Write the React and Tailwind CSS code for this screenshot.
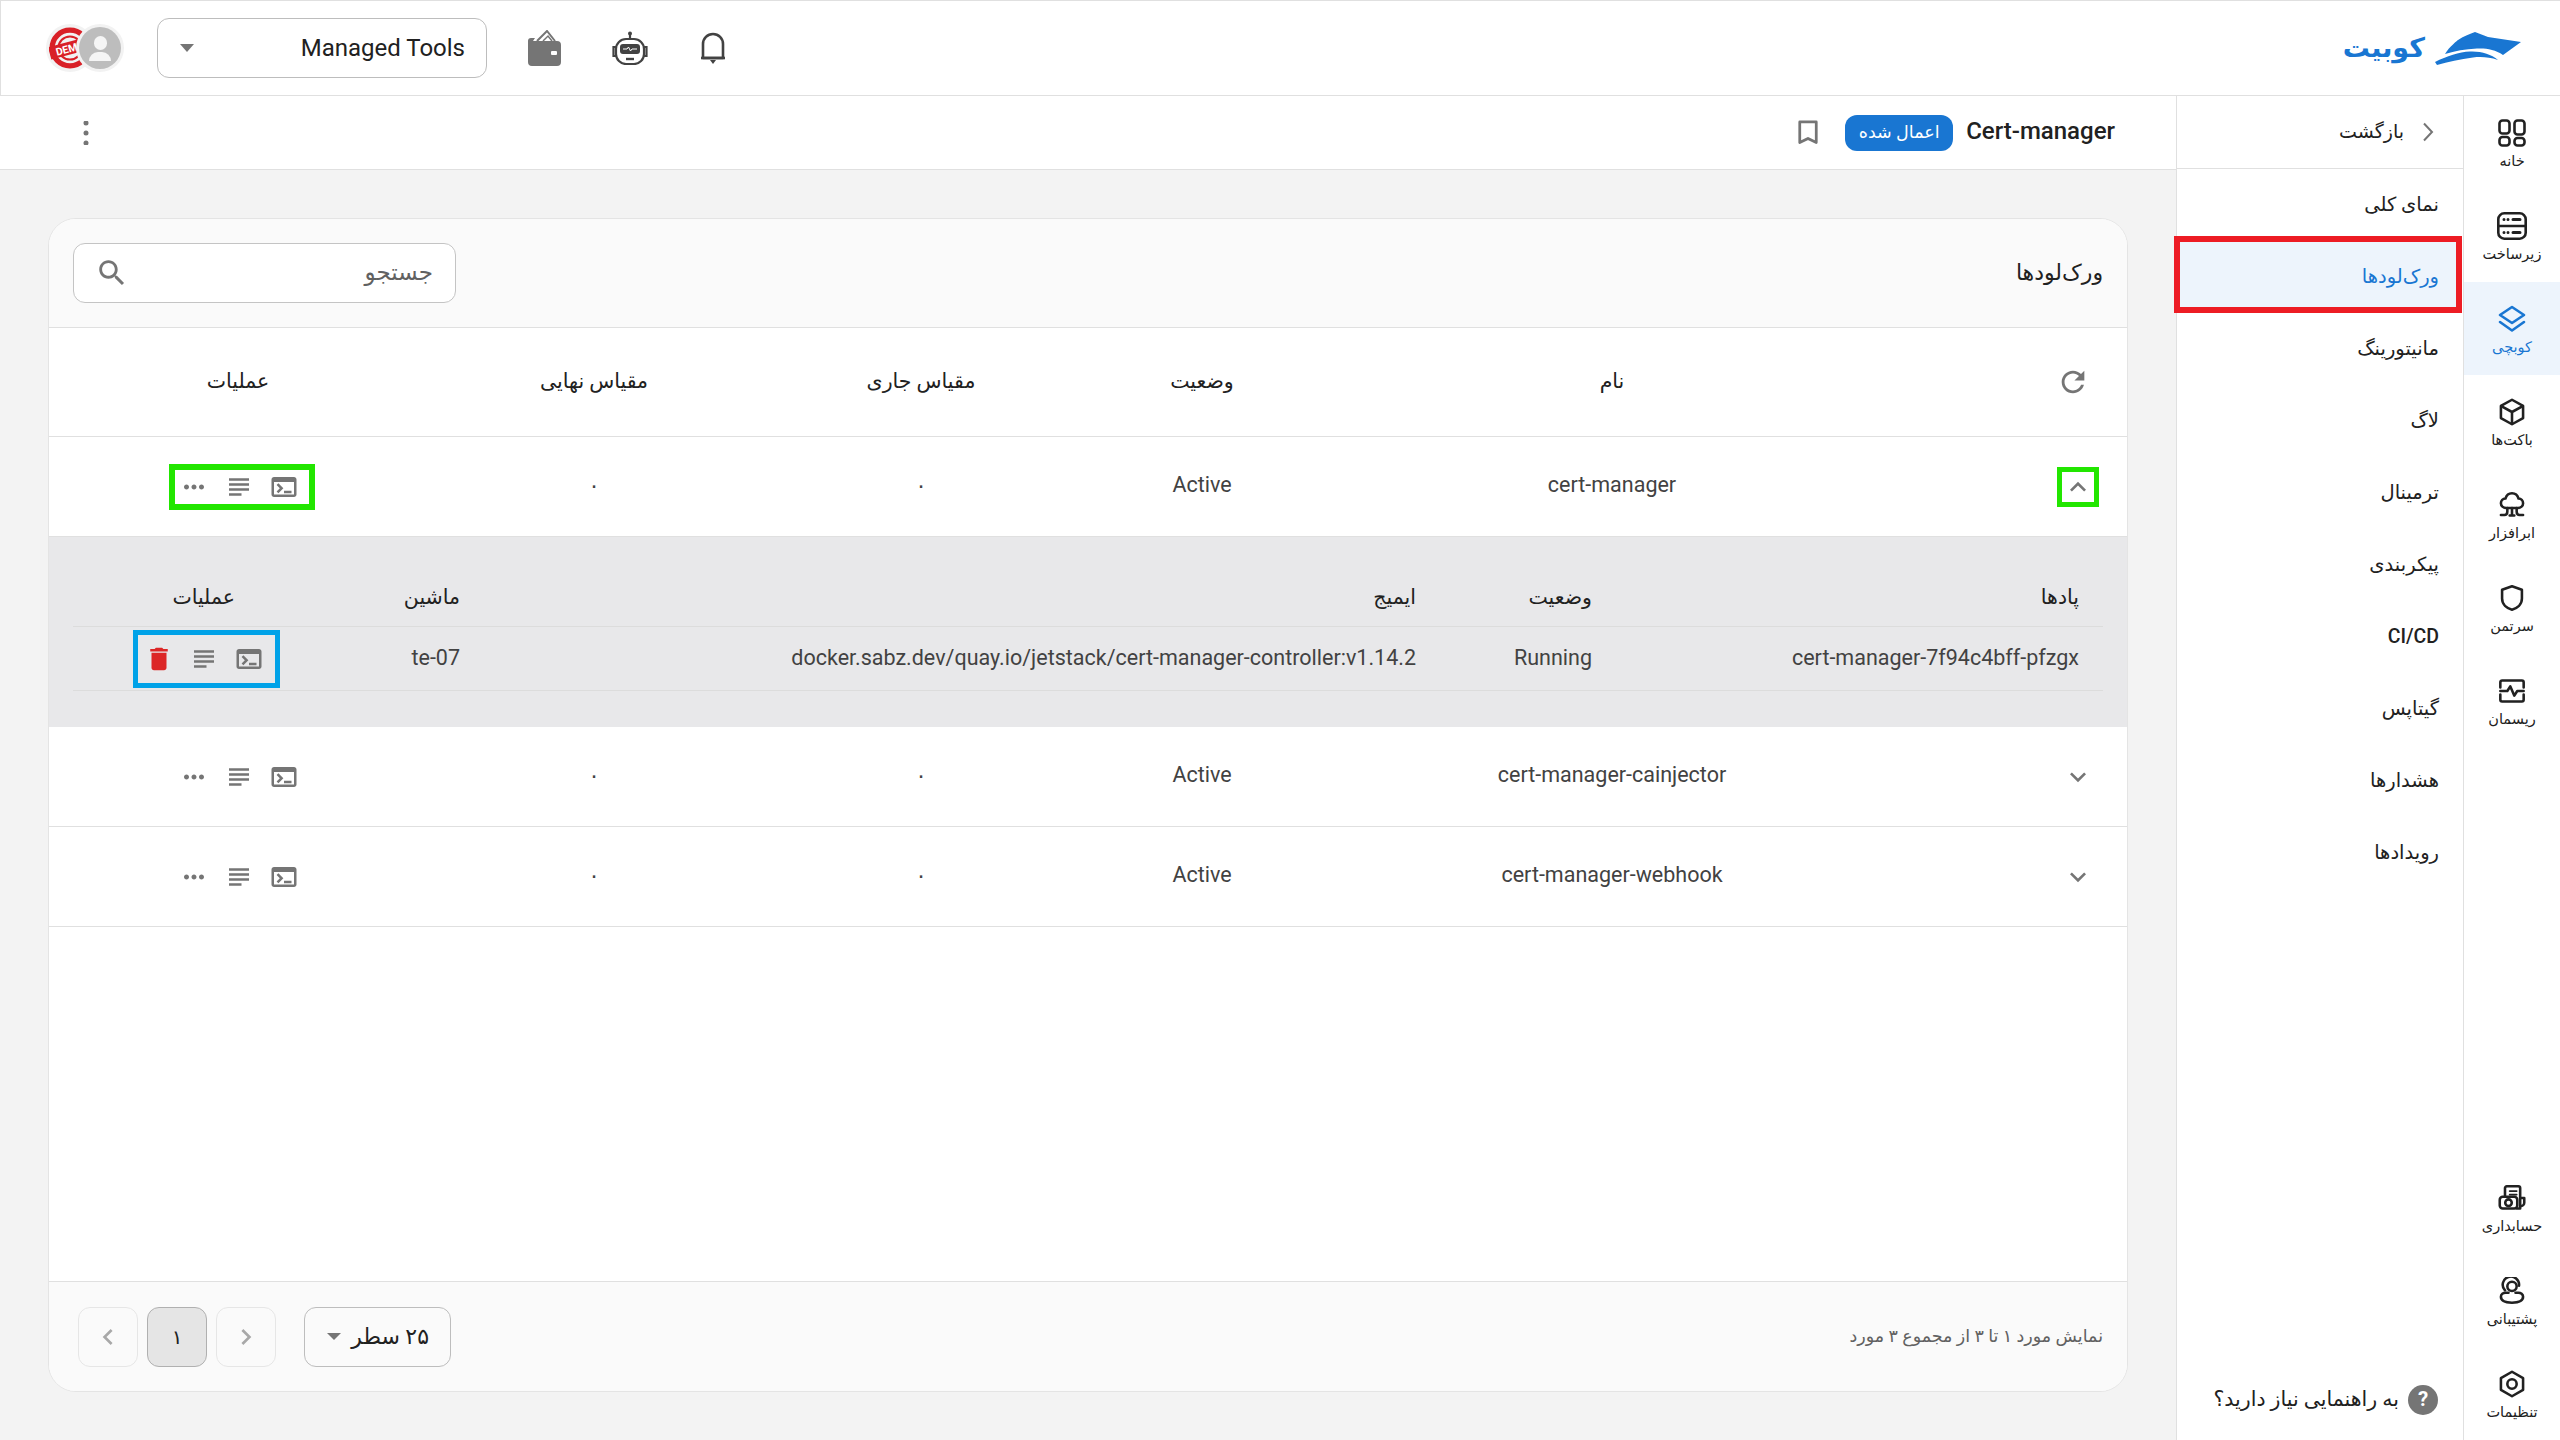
const M = ({ d, className = '' }) => (
  <svg viewBox="0 0 24 24" className={className} fill="currentColor"><path d={d} /></svg>
);

const S = ({ children, vb = '0 0 24 24', sw = 2 }) => (
  <svg viewBox={vb} className="w-full h-full" fill="none" stroke="currentColor" strokeWidth={sw} strokeLinecap="round" strokeLinejoin="round">{children}</svg>
);

const icons = {
  terminal: 'M20 4H4c-1.1 0-2 .9-2 2v12c0 1.1.9 2 2 2h16c1.1 0 2-.9 2-2V6c0-1.1-.9-2-2-2zm0 14H4V8h16v10zm-2-1h-6v-2h6v2zM7.5 17l-1.41-1.41L8.67 13l-2.59-2.59L7.5 9l4 4-4 4z',
  notes: 'M14 17H4v2h10v-2zm6-8H4v2h16V9zM4 15h16v-2H4v2zM4 5v2h16V5H4z',
  trash: 'M6 19c0 1.1.9 2 2 2h8c1.1 0 2-.9 2-2V7H6v12zM19 4h-3.5l-1-1h-5l-1 1H5v2h14V4z',
  dots: 'M6 10c-1.1 0-2 .9-2 2s.9 2 2 2 2-.9 2-2-.9-2-2-2zm12 0c-1.1 0-2 .9-2 2s.9 2 2 2 2-.9 2-2-.9-2-2-2zm-6 0c-1.1 0-2 .9-2 2s.9 2 2 2 2-.9 2-2-.9-2-2-2z',
  refresh: 'M17.65 6.35C16.2 4.9 14.21 4 12 4c-4.42 0-7.99 3.58-7.99 8s3.57 8 7.99 8c3.73 0 6.84-2.55 7.73-6h-2.08c-.82 2.33-3.04 4-5.65 4-3.31 0-6-2.69-6-6s2.69-6 6-6c1.66 0 3.14.69 4.22 1.78L13 11h7V4l-2.35 2.35z',
  search: 'M15.5 14h-.79l-.28-.27C15.41 12.59 16 11.11 16 9.5 16 5.91 13.09 3 9.5 3S3 5.91 3 9.5 5.91 16 9.5 16c1.61 0 3.09-.59 4.23-1.57l.27.28v.79l5 4.99L20.49 19l-4.99-5zm-6 0C7.01 14 5 11.99 5 9.5S7.01 5 9.5 5 14 7.01 14 9.5 11.99 14 9.5 14z',
  down: 'M16.59 8.59 12 13.17 7.41 8.59 6 10l6 6 6-6z',
  up: 'M12 8l-6 6 1.41 1.41L12 10.83l4.59 4.58L18 14z',
  left: 'M15.41 7.41 14 6l-6 6 6 6 1.41-1.41L10.83 12z',
  right: 'M10 6 8.59 7.41 13.17 12l-4.58 4.59L10 18l6-6z',
};

/* ── Rail icons ── */
const railIcons = {
  home: (
    <S vb="0 0 30 28" sw={2.6}>
      <rect x="2.500" y="1.500" width="10" height="13" rx="3" /><rect x="17.500" y="1.500" width="10" height="14" rx="3" />
      <rect x="2.500" y="18" width="10" height="8.500" rx="3" /><rect x="17.500" y="19" width="10" height="7.500" rx="3" />
    </S>
  ),
  infra: (
    <S vb="0 0 30 28" sw={2.6}>
      <rect x="1.300" y="1.300" width="27.400" height="25.400" rx="6" /><path d="M2 14h26" />
      <path d="M7 7.500h.01M11 7.500h.01M16 7.500h7M7 20.500h.01M11 20.500h.01M16 20.500h7" strokeWidth="3" />
    </S>
  ),
  kube: (
    <S vb="0 0 30 28" sw={2.600}>
      <path d="M15 2 27 10 15 18 3 10z" /><path d="M3 17l12 8.500L27 17" />
    </S>
  ),
  box: (
    <S sw={2.200}>
      <path d="M12 1.500 21.500 6.800v10.400L12 22.500l-9.500-5.300V6.800z" /><path d="M2.800 7 12 12l9.200-5M12 12v10" />
    </S>
  ),
  cloud: (
    <S sw={2.200}>
      <path d="M7 14.500c-2.600 0-4.500-1.700-4.500-4 0-2.200 1.700-3.900 3.900-4C7.200 3.700 9.400 2 12 2s4.800 1.700 5.600 4.500c2.200.1 3.900 1.800 3.900 4 0 2.300-1.900 4-4.500 4z" />
      <path d="M8 14.500v3c0 2-1 3-2.500 3H2.500M16 14.500v3c0 2 1 3 2.500 3h3M12 14.500v6M10 21h4" />
    </S>
  ),
  shield: (
    <S sw={2.200}>
      <path d="M12 2 3.500 5v7.500C3.500 17.500 7.500 20.800 12 22c4.500-1.200 8.500-4.500 8.500-9.500V5z" />
    </S>
  ),
  thread: (
    <S sw={2.200}>
      <path d="M2 9V4.500C2 3.700 2.700 3 3.500 3h17c.8 0 1.500.7 1.500 1.500V9M2 15v4.500c0 .8.7 1.500 1.500 1.500h17c.8 0 1.500-.7 1.500-1.500V15" />
      <path d="M2 12h6l2.500-4 3.500 8 2.500-4h5.500" />
    </S>
  ),
  account: (
    <S sw={2.200}>
      <path d="M6 10V3.500C6 2.700 6.700 2 7.500 2h10c.8 0 1.500.7 1.500 1.500V21h-3" />
      <path d="M10 6h6M10 9h6" strokeWidth="1.500" />
      <rect x="1.500" y="11" width="15" height="10" rx="2.500" /><circle cx="9" cy="16" r="2.800" />
      <path d="M19 12h3.500v4c0 1.500-1.200 3-3.500 3" />
    </S>
  ),
  support: (
    <S sw={2.200}>
      <circle cx="12" cy="8" r="4" /><path d="M6 11.500A7 7 0 1 1 18 7.500" />
      <path d="M9 13.500H6.500C4.500 13.500 2.500 14.800 2.500 17c0 3 3.500 5 9.500 5s9.500-2 9.500-5c0-2.200-2-3.500-4-3.500H15" />
    </S>
  ),
  settings: (
    <S sw={2.200}>
      <path d="M12 1.500 21.500 7v10L12 22.500 2.500 17V7z" /><circle cx="12" cy="12" r="4" />
    </S>
  ),
};

const topRail = [
  { key: 'home', label: 'خانه' },
  { key: 'infra', label: 'زیرساخت' },
  { key: 'kube', label: 'کوبچی', active: true },
  { key: 'box', label: 'باکت‌ها' },
  { key: 'cloud', label: 'ابرافزار' },
  { key: 'shield', label: 'سرتمن' },
  { key: 'thread', label: 'ریسمان' },
];
const bottomRail = [
  { key: 'account', label: 'حسابداری' },
  { key: 'support', label: 'پشتیبانی' },
  { key: 'settings', label: 'تنظیمات' },
];
const subItems = ['نمای کلی', 'ورک‌لودها', 'مانیتورینگ', 'لاگ', 'ترمینال', 'پیکربندی', 'CI/CD', 'گیتاپس', 'هشدارها', 'رویدادها'];

function RailItem({ item }) {
  return (
    <div className={`h-[93px] flex flex-col items-center pt-[23px] ${item.active ? 'bg-[#edf4fc] text-[#1976d2]' : 'text-[#212121]'}`}>
      <div className="w-[30px] h-[28px]">{railIcons[item.key]}</div>
      <span className="mt-[5px] text-[14.5px] leading-[20px]">{item.label}</span>
    </div>
  );
}

/* ── Logo ── */
function Logo() {
  return (
    <div className="flex items-center gap-[10px] text-[#1976d2]">
      <svg viewBox="0 0 86 33" className="w-[86px] h-[33px]" fill="currentColor">
        <path d="M40 0 53 5 86 10 68 23C60 17 50 16 42 16.500 30 17 20 19 10 22 14 15 23 8 23 8 29 4 35 2 40 0z" />
        <path d="M0 30C12 24 24 20 35 19.500 46 19 56 22 63 28 54 25 46 24.500 38 25.500 25 27 13 30 2 33z" />
      </svg>
      <span className="text-[27px] leading-none font-bold">کوبیت</span>
    </div>
  );
}

/* ── Top bar ── */
function TopBar() {
  return (
    <header className="h-[96px] shrink-0 bg-white border-y border-l border-[#e0e0e0] flex items-center justify-between pr-[39px] pl-[45px]">
      <Logo />
      <div className="flex items-center">
        <svg viewBox="0 0 26 32" className="w-[26px] h-[32px] text-[#424242] ml-[52px]" fill="none" stroke="currentColor" strokeWidth="2.600" strokeLinejoin="round">
          <path d="M3 26V12a10 10 0 0 1 20 0v14z" /><path d="M1 26h24" /><path d="M10 28h6l-3 4z" fill="currentColor" stroke="none" />
        </svg>
        <svg viewBox="0 0 36 34" className="w-[36px] h-[34px] text-[#424242] ml-[51px]" fill="none" stroke="currentColor" strokeWidth="2.200">
          <circle cx="18" cy="2.500" r="2" fill="currentColor" stroke="none" /><path d="M18 3v5" />
          <rect x="4" y="8" width="28" height="25" rx="10" /><path d="M4 16H1.500v9H4M32 16h2.500v9H32" />
          <rect x="8" y="13" width="20" height="10" rx="3" fill="currentColor" stroke="none" />
          <path d="M11 18h4l1.500-2 2 4 1.500-2h5" stroke="#fff" strokeWidth="1" /><path d="M14 28h8" strokeWidth="2.400" />
        </svg>
        <svg viewBox="0 0 34 36" className="w-[34px] h-[36px] text-[#757575] ml-[40px]" fill="none">
          <path d="M10 11 20 1l8 10" stroke="currentColor" strokeWidth="2" />
          <path d="M16 11l5-5 4 5" stroke="currentColor" strokeWidth="1.500" />
          <path d="M4 8h4l-2 3h24a4 4 0 0 1 4 4v17a4 4 0 0 1-4 4H5a4 4 0 0 1-4-4V11a3 3 0 0 1 3-3z" fill="currentColor" />
          <rect x="24" y="21" width="6" height="4" rx="1" fill="#fff" />
        </svg>
        <div className="w-[330px] h-[60px] rounded-[12px] border border-[#bdbdbd] flex items-center justify-between pr-[21px] pl-[22px] ml-[33px]">
          <span className="text-[24px] text-[#212121]" dir="ltr">Managed Tools</span>
          <span className="w-0 h-0 border-x-[7px] border-x-transparent border-t-[8px] border-t-[#757575]" />
        </div>
        <div className="relative w-[78px] h-[48px]">
          <div className="absolute left-0 top-0 w-[48px] h-[48px] rounded-full bg-[#f2f2f2] flex items-center justify-center">
            <svg viewBox="0 0 40 40" className="w-[42px] h-[42px]">
              <circle cx="20" cy="20" r="17" fill="none" stroke="#d92027" strokeWidth="5" />
              <circle cx="20" cy="20" r="11" fill="none" stroke="#d92027" strokeWidth="2" />
              <rect x="0" y="14" width="40" height="12" fill="#d92027" transform="rotate(-15 20 20)" />
              <text x="20" y="24" textAnchor="middle" fontSize="10" fontWeight="700" fill="#fff" transform="rotate(-15 20 20)" fontFamily="Roboto, sans-serif">DEMO</text>
            </svg>
          </div>
          <div className="absolute right-0 top-0 w-[48px] h-[48px] rounded-full bg-[#f2f2f2] flex items-center justify-center">
            <div className="w-[42px] h-[42px] rounded-full bg-[#bdbdbd] flex flex-col items-center justify-center">
              <span className="w-[13px] h-[14px] rounded-full bg-[#f5f5f5]" />
              <span className="w-[22px] h-[9px] mt-[2px] rounded-t-full bg-[#f5f5f5]" />
            </div>
          </div>
        </div>
      </div>
    </header>
  );
}

/* ── Actions box ── */
function ActionIcons({ first }) {
  return (
    <>
      <M d={icons.terminal} className="w-[30px] h-[30px] text-[#757575]" />
      <M d={icons.notes} className="w-[30px] h-[30px] text-[#757575] mr-[15px]" />
      {first}
    </>
  );
}

const mainCols = 'grid grid-cols-[200px_630px_190px_372px_282px_405px] items-center text-center';
const subCols = 'grid grid-cols-[487px_176px_956px_180px_232px] items-center border-b border-[#dcdcdc]';

function Row({ name, open, framed }) {
  return (
    <div className={`${mainCols} h-[100px] border-b border-[#e0e0e0] text-[21.5px] text-[#424242]`}>
      <div className="pr-[28px]">
        <div className={`w-[42px] h-[40px] flex items-center justify-center border-[5px] ${framed ? 'border-[#22e600]' : 'border-transparent'}`}>
          <M d={open ? icons.up : icons.down} className="w-[32px] h-[32px] shrink-0 text-[#757575]" />
        </div>
      </div>
      <div className="pb-[2px]">{name}</div>
      <div className="pb-[2px]">Active</div>
      <div>۰</div>
      <div>۰</div>
      <div className="pr-[17px] flex justify-center">
        <div className={`w-[146px] h-[46px] flex items-center pr-[10px] border-[6px] ${framed ? 'border-[#22e600]' : 'border-transparent'}`}>
          <ActionIcons first={<M d={icons.dots} className="w-[30px] h-[30px] text-[#757575] mr-[15px]" />} />
        </div>
      </div>
    </div>
  );
}

function PodsPanel() {
  return (
    <div className="h-[190px] bg-[#e8e8ea] px-[24px] text-[21.5px] text-[#424242]">
      <div className={`${subCols} h-[90px] pt-[32px] text-[20.5px] text-[#212121]`}>
        <div className="pr-[24px]">پادها</div>
        <div className="pr-[24px]">وضعیت</div>
        <div className="pr-[24px]">ایمیج</div>
        <div className="pr-[24px]">ماشین</div>
        <div className="pr-[69px]">عملیات</div>
      </div>
      <div className={`${subCols} h-[64px]`}>
        <div className="pr-[24px]">cert-manager-7f94c4bff-pfzgx</div>
        <div className="pr-[24px]">Running</div>
        <div className="pr-[24px]">docker.sabz.dev/quay.io/jetstack/cert-manager-controller:v1.14.2</div>
        <div className="pr-[24px]">te-07</div>
        <div className="pr-[24px]">
          <div className="w-[147px] h-[58px] flex items-center pr-[11px] border-[5px] border-[#00a2e8]">
            <ActionIcons first={<M d={icons.trash} className="w-[30px] h-[30px] text-[#dc2626] mr-[15px]" />} />
          </div>
        </div>
      </div>
    </div>
  );
}

function WorkloadsCard() {
  return (
    <section className="flex-1 flex flex-col rounded-[28px] border border-[#e4e4e4] bg-white overflow-hidden">
      <div className="h-[109px] shrink-0 bg-[#fafafa] border-b border-[#e0e0e0] flex items-center justify-between pr-[24px] pl-[24px]">
        <h1 className="text-[22px] font-medium text-[#212121] pb-[2px]">ورک‌لودها</h1>
        <div className="w-[383px] h-[60px] bg-white rounded-[12px] border border-[#c4c4c4] flex items-center justify-between pr-[22px] pl-[21px]">
          <span className="text-[23px] text-[#616161]">جستجو</span>
          <M d={icons.search} className="w-[34px] h-[34px] text-[#757575]" />
        </div>
      </div>

      <div className={`${mainCols} h-[109px] shrink-0 border-b border-[#e0e0e0] text-[20.5px] text-[#212121]`}>
        <div className="pr-[37px]"><M d={icons.refresh} className="w-[34px] h-[34px] text-[#757575]" /></div>
        <div className="pb-[2px]">نام</div>
        <div className="pb-[2px]">وضعیت</div>
        <div className="pb-[2px]">مقیاس جاری</div>
        <div className="pb-[2px]">مقیاس نهایی</div>
        <div className="pr-[25px] pb-[2px]">عملیات</div>
      </div>

      <Row name="cert-manager" open framed />
      <PodsPanel />
      <Row name="cert-manager-cainjector" />
      <Row name="cert-manager-webhook" />

      <div className="flex-1" />

      <div className="h-[110px] shrink-0 bg-[#fafafa] border-t border-[#e0e0e0] flex items-center justify-between pr-[24px] pl-[29px]">
        <span className="text-[17.5px] text-[#616161]">نمایش مورد ۱ تا ۳ از مجموع ۳ مورد</span>
        <div className="flex items-center">
          <div className="w-[147px] h-[60px] rounded-[12px] border border-[#bdbdbd] flex items-center justify-between pr-[21px] pl-[22px] ml-[28px]">
            <span className="text-[22px] text-[#212121]">۲۵ سطر</span>
            <span className="w-0 h-0 border-x-[7px] border-x-transparent border-t-[7px] border-t-[#757575]" />
          </div>
          <div className="w-[60px] h-[60px] rounded-[12px] border border-[#e6e6e6] flex items-center justify-center ml-[9px]">
            <M d={icons.right} className="w-[32px] h-[32px] text-[#a8a8a8]" />
          </div>
          <div className="w-[60px] h-[60px] rounded-[12px] border border-[#b0b0b0] bg-[#e5e5e5] flex items-center justify-center ml-[9px] text-[20px] font-medium text-[#212121]">۱</div>
          <div className="w-[60px] h-[60px] rounded-[12px] border border-[#e6e6e6] flex items-center justify-center">
            <M d={icons.left} className="w-[32px] h-[32px] text-[#a8a8a8]" />
          </div>
        </div>
      </div>
    </section>
  );
}

function SubSidebar() {
  return (
    <aside className="w-[287px] shrink-0 bg-white border-l border-[#e0e0e0] flex flex-col">
      <div className="h-[73px] shrink-0 border-b border-[#e0e0e0] flex items-center pr-[29px] gap-[18px] text-[19px] text-[#212121]">
        <svg viewBox="0 0 12 20" className="w-[12px] h-[20px] text-[#757575]" fill="none" stroke="currentColor" strokeWidth="2">
          <path d="M2 1.500 10 10l-8 8.500" />
        </svg>
        <span>بازگشت</span>
      </div>
      {subItems.map(label => {
        const active = label === 'ورک‌لودها';
        return (
          <div key={label} className={`relative h-[72px] shrink-0 flex items-center pr-[24px] text-[19.5px] font-medium ${active ? 'text-[#1976d2]' : 'text-[#212121]'}`}>
            {active && <span className="absolute -top-[5px] bottom-0 -left-[3px] right-[1px] border-[6px] border-[#ed1c24] bg-[#edf4fc]" />}
            <span className="relative">{label}</span>
          </div>
        );
      })}
      <div className="mt-auto pb-[25px] pr-[25px] flex items-center gap-[9px] text-[20.5px] text-[#212121]">
        <span className="w-[30px] h-[30px] rounded-full bg-[#757575] text-white font-bold flex items-center justify-center">?</span>
        <span>به راهنمایی نیاز دارید؟</span>
      </div>
    </aside>
  );
}

export default function App() {
  return (
    <div dir="rtl" className="w-[2560px] h-[1440px] overflow-hidden flex flex-col bg-[#f3f3f3] font-['Roboto','DejaVu_Sans',sans-serif]">
      <TopBar />
      <div className="flex-1 flex min-h-0">
        <nav className="w-[97px] shrink-0 bg-white border-l border-[#e0e0e0] flex flex-col justify-between">
          <div>{topRail.map(item => <RailItem key={item.key} item={item} />)}</div>
          <div>{bottomRail.map(item => <RailItem key={item.key} item={item} />)}</div>
        </nav>
        <SubSidebar />
        <main className="flex-1 min-w-0 flex flex-col">
          <div className="h-[74px] shrink-0 bg-white border-b border-[#e0e0e0] flex items-center justify-between pr-[61px] pl-[74px]">
            <div className="flex items-center">
              <span className="text-[24px] font-medium text-[#212121] pb-[3px]" dir="ltr">Cert-manager</span>
              <span className="w-[108px] h-[36px] mr-[13px] rounded-[12px] bg-[#1976d2] text-white text-[17.5px] flex items-center justify-center">اعمال شده</span>
              <svg viewBox="0 0 24 28" className="w-[22px] h-[27px] mr-[26px] text-[#757575]" fill="none" stroke="currentColor" strokeWidth="3">
                <path d="M3 2.500h18V25l-9-4.500L3 25z" strokeLinejoin="round" />
              </svg>
            </div>
            <svg viewBox="0 0 24 24" className="w-[24px] h-[24px] text-[#757575]" fill="currentColor">
              <circle cx="12" cy="2" r="2.500" /><circle cx="12" cy="12" r="2.500" /><circle cx="12" cy="22" r="2.500" />
            </svg>
          </div>
          <div className="flex-1 min-h-0 flex pt-[48px] pr-[48px] pb-[48px] pl-[48px]">
            <WorkloadsCard />
          </div>
        </main>
      </div>
    </div>
  );
}
